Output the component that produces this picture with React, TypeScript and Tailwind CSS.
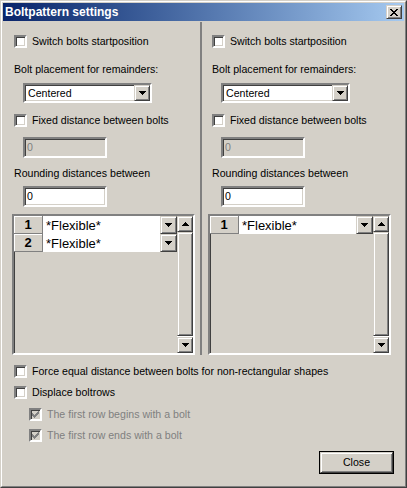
import React from "react";

const sunken =
  "border-2 border-t-[#808080] border-l-[#808080] border-r-white border-b-white shadow-[inset_1px_1px_0_#404040,inset_-1px_-1px_0_#d4d0c8]";
const raised =
  "border border-t-[#d4d0c8] border-l-[#d4d0c8] border-r-[#404040] border-b-[#404040] shadow-[inset_1px_1px_0_#fff,inset_-1px_-1px_0_#808080] bg-[#d4d0c8]";

function Arrow({ up, color = "#000" }: { up?: boolean; color?: string }) {
  return (
    <svg width="7" height="4" viewBox="0 0 7 4" shapeRendering="crispEdges">
      <path d={up ? "M3 0h1v1h1v1h1v1h1v1H0V3h1V2h1V1h1z" : "M0 0h7v1H6v1H5v1H4v1H3V3H2V2H1V1H0z"} fill={color} />
    </svg>
  );
}

function Check({ checked, disabled }: { checked?: boolean; disabled?: boolean }) {
  return (
    <span
      className={`${sunken} w-[13px] h-[13px] shrink-0 flex items-center justify-center ${
        disabled ? "bg-[#d4d0c8]" : "bg-white"
      }`}
    >
      {checked && (
        <svg width="7" height="7" viewBox="0 0 7 7" shapeRendering="crispEdges">
          <path
            d="M6 0h1v1H6zM5 1h2v1H5zM0 2h1v1H0zM4 2h3v1H4zM0 3h2v1H0zM3 3h3v1H3zM0 4h5v1H0zM1 5h3v1H1zM2 6h1v1H2z"
            fill={disabled ? "#808080" : "#000"}
          />
        </svg>
      )}
    </span>
  );
}

function CheckRow({
  label,
  checked,
  disabled,
  className = "",
}: {
  label: string;
  checked?: boolean;
  disabled?: boolean;
  className?: string;
}) {
  return (
    <div className={`flex items-center gap-[5px] h-[13px] ${className}`}>
      <Check checked={checked} disabled={disabled} />
      <span className={`whitespace-nowrap ${disabled ? "text-[#808080]" : ""}`}>{label}</span>
    </div>
  );
}

function Select({ value }: { value: string }) {
  return (
    <div className={`${sunken} ml-[9px] w-[129px] h-[20px] bg-white flex items-center`}>
      <span className="flex-1 pl-[3px]">{value}</span>
      <span className={`${raised} w-[16px] h-[16px] flex items-center justify-center`}>
        <Arrow />
      </span>
    </div>
  );
}

function TextBox({ value, disabled }: { value: string; disabled?: boolean }) {
  return (
    <div
      className={`${sunken} ml-[9px] w-[84px] h-[21px] flex items-center pl-[2px] ${
        disabled ? "bg-[#d4d0c8] text-[#808080]" : "bg-white"
      }`}
    >
      {value}
    </div>
  );
}

function ScrollBar() {
  return (
    <div className="w-[16px] flex flex-col">
      <span className={`${raised} h-[16px] flex items-center justify-center`}>
        <Arrow up />
      </span>
      <span className={`${raised} flex-1`} />
      <span className="h-[1px] bg-white" />
      <span className={`${raised} h-[16px] flex items-center justify-center`}>
        <Arrow />
      </span>
    </div>
  );
}

function BoltGrid({ rows, className }: { rows: number; className: string }) {
  return (
    <div className={`${sunken} w-[183px] h-[141px] bg-[#d4d0c8] flex ${className}`}>
      <div className="w-[163px] flex flex-col">
        {Array.from({ length: rows }, (_, i) => (
          <div key={i} className="h-[18px] flex">
            <span className="w-[29px] border-r border-b border-[#808080] shadow-[inset_1px_1px_0_#fff] flex items-center justify-center font-bold text-[13px]">
              {i + 1}
            </span>
            <span className="flex-1 bg-white flex items-center">
              <span className="flex-1 pl-[3px] text-[13px]">*Flexible*</span>
              <span className={`${raised} w-[17px] h-[18px] flex items-center justify-center`}>
                <Arrow />
              </span>
            </span>
          </div>
        ))}
      </div>
      <ScrollBar />
    </div>
  );
}

function SidePanel({ pad, gridClass, rows }: { pad: string; gridClass: string; rows: number }) {
  return (
    <div className={`flex flex-col pt-[13px] ${pad}`}>
      <CheckRow label="Switch bolts startposition" />
      <div className="mt-[15px] whitespace-nowrap">Bolt placement for remainders:</div>
      <div className="mt-[7px]">
        <Select value="Centered" />
      </div>
      <CheckRow label="Fixed distance between bolts" className="mt-[11px]" />
      <div className="mt-[10px]">
        <TextBox value="0" disabled />
      </div>
      <div className="mt-[9px] whitespace-nowrap">Rounding distances between</div>
      <div className="mt-[6px]">
        <TextBox value="0" />
      </div>
      <BoltGrid rows={rows} className={`mt-[7px] ${gridClass}`} />
    </div>
  );
}

function TitleBar() {
  return (
    <div className="h-[18px] shrink-0 bg-linear-to-r from-[#0a246a] to-[#a6caf0] flex items-center pl-[2px] pr-[2px]">
      <span className="flex-1 font-bold text-white text-[12px] leading-[14px]">Boltpattern settings</span>
      <span className={`${raised} w-[16px] h-[14px] flex items-center justify-center`}>
        <svg width="8" height="7" viewBox="0 0 8 7" shapeRendering="crispEdges">
          <path
            d="M0 0h2v1H0zM6 0h2v1H6zM1 1h2v1H1zM5 1h2v1H5zM2 2h4v1H2zM3 3h2v1H3zM2 4h4v1H2zM1 5h2v1H1zM5 5h2v1H5zM0 6h2v1H0zM6 6h2v1H6z"
            fill="#000"
          />
        </svg>
      </span>
    </div>
  );
}

export default function App() {
  return (
    <div className="w-[407px] h-[488px] font-['Liberation_Sans',Arial,sans-serif] text-[10.6px] leading-[13px] text-black">
      <div className="h-full border border-t-[#d4d0c8] border-l-[#d4d0c8] border-r-[#404040] border-b-[#404040] bg-[#d4d0c8]">
        <div className="h-full border border-t-white border-l-white border-r-[#808080] border-b-[#808080] p-px flex flex-col">
          <TitleBar />
          <div className="mt-px h-[333px] flex">
            <div className="w-[197px]">
              <SidePanel pad="pl-[11px]" gridClass="-ml-[2px]" rows={2} />
            </div>
            <div className="w-[2px] bg-[#808080]" />
            <div className="flex-1">
              <SidePanel pad="pl-[10px]" gridClass="-ml-[4px]" rows={1} />
            </div>
          </div>
          <div className="flex flex-col pl-[11px]">
            <CheckRow label="Force equal distance between bolts for non-rectangular shapes" className="mt-[10px]" />
            <CheckRow label="Displace boltrows" className="mt-[8px]" />
            <CheckRow label="The first row begins with a bolt" checked disabled className="mt-[9px] ml-[15px]" />
            <CheckRow label="The first row ends with a bolt" checked disabled className="mt-[8px] ml-[15px]" />
            <div className="mt-[9px] pr-[10px] flex justify-end">
              <button className="w-[75px] h-[23px] border border-black">
                <span className={`${raised} h-full w-full flex items-center justify-center`}>Close</span>
              </button>
            </div>
          </div>
        </div>
      </div>
    </div>
  );
}
